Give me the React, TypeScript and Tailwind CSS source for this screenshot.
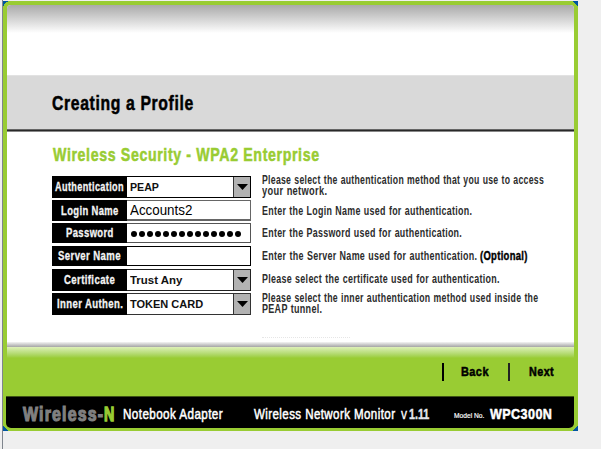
import { useLayoutEffect, useRef, type ReactNode } from "react";

/** Condensed text: squeezes one line of text to the width of its box. */
function Fit({ className, children }: { className: string; children: ReactNode }) {
  const box = useRef<HTMLSpanElement>(null);
  const text = useRef<HTMLSpanElement>(null);
  useLayoutEffect(() => {
    if (box.current && text.current) {
      text.current.style.transform = `scaleX(${box.current.clientWidth / text.current.offsetWidth})`;
    }
  }, []);
  return (
    <span ref={box} className={`block shrink-0 whitespace-nowrap ${className}`}>
      <span ref={text} className="inline-block origin-left align-top">
        {children}
      </span>
    </span>
  );
}

function Row({
  className,
  label,
  labelWidth,
  field,
  fieldClass,
  select,
  children,
}: {
  className: string;
  label: string;
  labelWidth: string;
  field?: ReactNode;
  fieldClass: string;
  select?: boolean;
  children: ReactNode;
}) {
  return (
    <div className={`flex ${className}`}>
      <div className="flex w-[75px] items-center justify-center bg-black text-[12px] leading-[14px] font-bold tracking-[0.5px] text-[#f4f4f4] [-webkit-text-stroke:0.3px_#f4f4f4]">
        <Fit className={labelWidth}>{label}</Fit>
      </div>
      <div className={`flex w-[124px] items-center border-y border-r bg-white pl-[3px] ${fieldClass}`}>
        {field}
        {select && (
          <div className="ml-auto flex w-[17px] items-center justify-center self-stretch border-l border-[#333] bg-[#b2b2b2]">
            <svg width="11" height="6" viewBox="0 0 11 6">
              <path d="M0 0H11L5.5 6Z" fill="#000" />
            </svg>
          </div>
        )}
      </div>
      <div className="ml-[11px] flex flex-col justify-center text-[12px] leading-[12px] font-bold tracking-[0.4px] text-[#2c2c2c] [word-spacing:0.5px]">
        {children}
      </div>
    </div>
  );
}

function Corner({ className, d }: { className: string; d: string }) {
  return (
    <svg className={`absolute ${className}`} width="5" height="5" viewBox="0 0 5 5">
      <path d={d} fill="#0055a0" />
    </svg>
  );
}

export default function App() {
  return (
    <div className="flex h-[449px] w-[601px] overflow-hidden bg-[#efefef] font-['Liberation_Sans',Arial,sans-serif]">
      <div className="ml-[2px] w-px bg-[#7f858d]" />
      <div className="relative mt-px flex h-[430px] w-[575px] flex-col bg-[#9c3] pt-[4px]">
        <Corner className="top-0 left-0" d="M0 0H5V1H3V2H2V3H1V5H0Z" />
        <Corner className="top-0 right-0" d="M0 0H5V5H4V4H3V3H2V2H1V1H0Z" />
        <Corner className="bottom-0 left-0" d="M0 0H1V1H2V2H3V3H4V4H5V5H0Z" />
        <Corner className="right-0 bottom-0" d="M5 0V5H0V4H1V3H2V2H3V1H4V0Z" />

        <main className="mx-[4px] flex h-[342px] flex-col overflow-hidden rounded-t-[4px] bg-white">
          <div className="h-[28px] bg-linear-to-b from-[#aaa] to-white" />
          <div className="mt-[42px] flex h-[57px] flex-col border-t border-b-0 border-[#e2e2e2] bg-[#d9d9d9]">
            <h1 className="mt-[17px] ml-[45px] h-[36px] text-[19.5px] leading-[20px] font-bold tracking-[0.8px] text-black [-webkit-text-stroke:0.5px_#000]">
              <Fit className="w-[142px]">Creating a Profile</Fit>
            </h1>
            <div className="h-px bg-[#666]" />
            <div className="h-px bg-[#292929]" />
            <div className="h-px bg-[#888]" />
          </div>

          <h2 className="mt-[13px] ml-[46px] h-[31px] text-[18px] leading-[20px] font-bold tracking-[0.8px] text-[#9c3] [-webkit-text-stroke:0.5px_#99cc33]">
            <Fit className="w-[267px]">Wireless Security - WPA2 Enterprise</Fit>
          </h2>

          <div className="ml-[45px] flex flex-col">
            <Row
              className="h-[22px]"
              label="Authentication"
              labelWidth="w-[69px]"
              fieldClass="border-black"
              select
              field={<Fit className="w-[29px] text-[11px] leading-[14px] font-bold text-[#111]">PEAP</Fit>}
            >
              <div className="-mt-[3px] leading-[11px]">
                <Fit className="w-[282px]">Please select the authentication method that you use to access</Fit>
                <Fit className="w-[65px]">your network.</Fit>
              </div>
            </Row>
            <Row
              className="mt-[2px] h-[21px]"
              label="Login Name"
              labelWidth="w-[58px]"
              fieldClass="border-[#666] border-b-2"
              field={<Fit className="w-[62px] text-[14px] leading-[16px] text-black">Accounts2</Fit>}
            >
              <Fit className="w-[210px]">Enter the Login Name used for authentication.</Fit>
            </Row>
            <Row
              className="mt-[2px] h-[20px]"
              label="Password"
              labelWidth="w-[48px]"
              fieldClass="border-[#555]"
              field={
                <div className="ml-px flex gap-[2px]">
                  {Array.from({ length: 14 }, (_, i) => (
                    <span key={i} className="mt-[2px] size-[6px] rounded-full bg-black" />
                  ))}
                </div>
              }
            >
              <Fit className="w-[200px]">Enter the Password used for authentication.</Fit>
            </Row>
            <Row
              className="mt-[3px] h-[20px]"
              label="Server Name"
              labelWidth="w-[63px]"
              fieldClass="border-black"
            >
              <div className="flex gap-[3px]">
                <Fit className="w-[215px]">Enter the Server Name used for authentication.</Fit>
                <Fit className="w-[48px] text-black [-webkit-text-stroke:0.4px_#000]">(Optional)</Fit>
              </div>
            </Row>
            <Row
              className="mt-[3px] h-[22px]"
              label="Certificate"
              labelWidth="w-[51px]"
              fieldClass="border-[#222]"
              select
              field={<Fit className="w-[52px] text-[11px] leading-[14px] font-bold text-[#111]">Trust Any</Fit>}
            >
              <div className="-mt-[2px]">
                <Fit className="w-[238px]">Please select the certificate used for authentication.</Fit>
              </div>
            </Row>
            <Row
              className="mt-[2px] h-[22px]"
              label="Inner Authen."
              labelWidth="w-[66px]"
              fieldClass="border-[#333]"
              select
              field={<Fit className="w-[73px] text-[11px] leading-[14px] font-bold text-[#111]">TOKEN CARD</Fit>}
            >
              <div className="leading-[11px]">
                <Fit className="w-[276px]">Please select the inner authentication method used inside the</Fit>
                <Fit className="w-[60px]">PEAP tunnel.</Fit>
              </div>
            </Row>
          </div>

          <div className="mt-[22px] ml-[255px] w-[88px] border-t border-dotted border-[#e6e6e6]" />
          <div className="mt-auto h-[5px] shrink-0 bg-linear-to-b from-[#f4f4f4] to-[#a5a5a5]" />
        </main>

        <nav className="mr-[4px] ml-[4px] flex h-[49px] bg-linear-to-b from-[#def0b8] to-[#9c3] to-[11px] pt-[16px] text-[12.5px] leading-[18px] font-bold tracking-[0.5px] text-black [-webkit-text-stroke:0.5px_#000]">
          <div className="ml-[435px] h-[18px] w-[2px] bg-black" />
          <Fit className="ml-[17px] w-[28px]">Back</Fit>
          <div className="ml-[19px] h-[18px] w-[2px] bg-[#222]" />
          <Fit className="ml-[19px] w-[25px]">Next</Fit>
        </nav>

        <footer className="mr-[4px] ml-[3px] flex h-[32px] rounded-b-[5px] border-t border-[#3d5214] bg-black pl-[17px] text-[14px] leading-[34px] text-white">
          <Fit className="w-[81px] text-[20px] font-bold tracking-[1.5px] text-[#808080] [-webkit-text-stroke:1.2px_#808080]">
            Wireless-
          </Fit>
          <Fit className="w-[10px] text-[20px] font-bold text-[#9c3] [-webkit-text-stroke:1.4px_#99cc33]">N</Fit>
          <Fit className="ml-[9px] w-[100px] tracking-[0.5px] [-webkit-text-stroke:0.5px_#fff]">Notebook Adapter</Fit>
          <Fit className="ml-[31px] w-[141px] tracking-[0.5px] [-webkit-text-stroke:0.5px_#fff]">
            Wireless Network Monitor
          </Fit>
          <Fit className="ml-[6px] w-[6px] [-webkit-text-stroke:0.3px_#fff]">v</Fit>
          <Fit className="ml-[2px] w-[20px] text-[15px] font-bold text-[#e4e8ee] [-webkit-text-stroke:0.4px_#e4e8ee]">1.11</Fit>
          <Fit className="ml-[25px] w-[30px] pt-[2px] text-[8px] [-webkit-text-stroke:0.2px_#fff]">Model No.</Fit>
          <Fit className="ml-[6px] w-[62px] text-[15px] font-bold tracking-[0.5px] [-webkit-text-stroke:0.5px_#fff]">
            WPC300N
          </Fit>
        </footer>
      </div>
    </div>
  );
}
